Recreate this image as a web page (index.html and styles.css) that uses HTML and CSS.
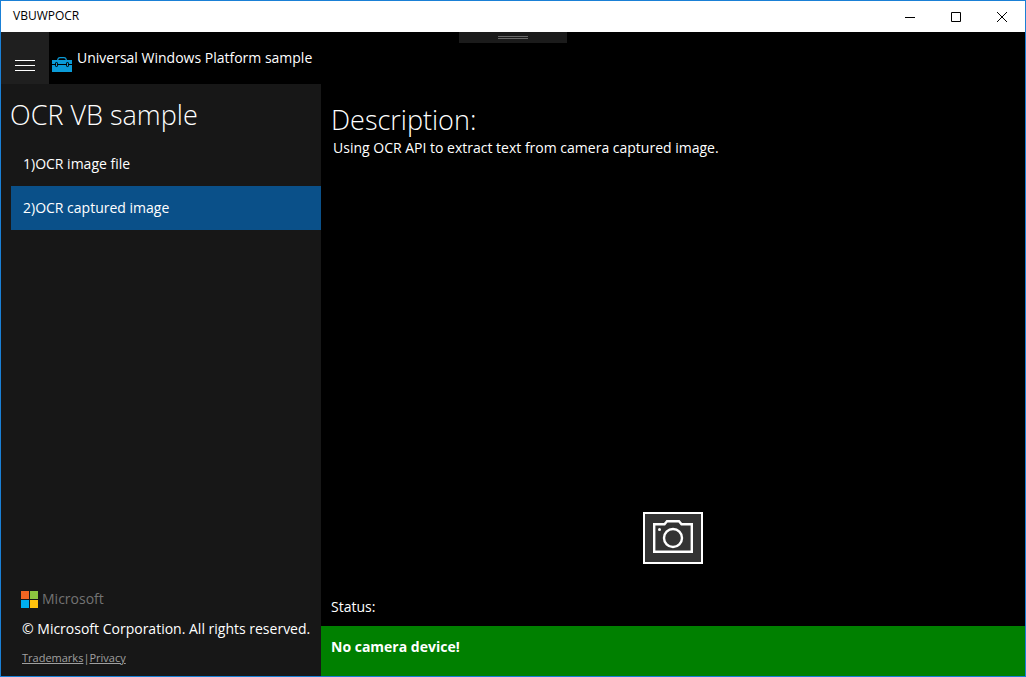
FILE: index.html
```
<!DOCTYPE html>
<html lang="en">
<head>
<meta charset="utf-8">
<title>VBUWPOCR</title>
<link rel="stylesheet" href="styles.css">
</head>
<body>
<div class="window">
  <div class="titlebar">
    <span class="titlebar-name">VBUWPOCR</span>
    <div class="caption-buttons">
      <button class="caption-button" type="button" aria-label="Minimize"><svg width="10" height="10" viewBox="0 0 10 10"><path d="M0 5.5H10"/></svg></button>
      <button class="caption-button" type="button" aria-label="Maximize"><svg width="10" height="10" viewBox="0 0 10 10"><path d="M.5.5h9v9h-9z"/></svg></button>
      <button class="caption-button" type="button" aria-label="Close"><svg width="10" height="10" viewBox="0 0 10 10"><path d="M0 0L10 10M10 0L0 10"/></svg></button>
    </div>
  </div>
  <div class="client">
    <div class="drag-handle"><span class="grip"></span></div>
    <header class="header">
      <button class="menu-button" type="button" aria-label="Menu"><svg width="20" height="12" viewBox="0 0 20 12"><path d="M0 .5H20M0 5.5H20M0 10.5H20"/></svg></button>
      <svg class="toolbox" width="20" height="15" viewBox="0 0 20 15">
        <path d="M0 3h20v12H0z" fill="#0a9bd8"/>
        <path d="M5.500 3.500Q6 .6 8 .6h4Q14 .6 14.500 3.500" fill="none" stroke="#0a9bd8" stroke-width="1.200"/>
        <path d="M0 7.500H3M6 7.500H14M17 7.500H20" stroke="#000"/>
        <rect x="3.500" y="5.500" width="2" height="4" rx=".7" fill="#0a9bd8" stroke="#000"/>
        <rect x="14.500" y="5.500" width="2" height="4" rx=".7" fill="#0a9bd8" stroke="#000"/>
      </svg>
      <span class="header-title">Universal Windows Platform sample</span>
    </header>
    <div class="body">
      <aside class="sidebar">
        <h1 class="heading sample-name">OCR VB sample</h1>
        <nav class="scenarios">
          <button class="scenario" type="button">1)OCR image file</button>
          <button class="scenario selected" type="button" aria-current="page">2)OCR captured image</button>
        </nav>
        <footer class="footer">
          <div class="brand">
            <svg width="17" height="17" viewBox="0 0 17 17"><path fill="#f26522" d="M0 0h8v8H0z"/><path fill="#8dc63f" d="M9 0h8v8H9z"/><path fill="#00aeef" d="M0 9h8v8H0z"/><path fill="#ffc20e" d="M9 9h8v8H9z"/></svg>
            <span class="brand-name">Microsoft</span>
          </div>
          <p class="copyright">© Microsoft Corporation. All rights reserved.</p>
          <div class="links"><a href="#trademarks">Trademarks</a><span class="divider">|</span><a href="#privacy">Privacy</a></div>
        </footer>
      </aside>
      <main class="main">
        <section class="description">
          <h2 class="heading">Description:</h2>
          <p class="description-text">Using OCR API to extract text from camera captured image.</p>
        </section>
        <button class="camera-button" type="button" aria-label="Capture image">
          <svg width="40" height="36" viewBox="0 0 40 36" fill="none" stroke="#fff" stroke-width="2.400"><path d="M1.200 4.200H11.500L14 1.200H26L28.500 4.200H38.800V31.800H1.200z"/><circle cx="20" cy="18" r="9"/><circle cx="6.500" cy="9.500" r="1.500" fill="#fff" stroke="none"/></svg>
        </button>
        <p class="status-label">Status:</p>
        <div class="status" role="status">No camera device!</div>
      </main>
    </div>
  </div>
</div>
</body>
</html>
```
FILE: styles.css
```
* {
  box-sizing: border-box;
}

body,
h1,
h2,
p {
  margin: 0;
}

body {
  font: 14px/20px "Open Sans", "Noto Sans", sans-serif;
  color: #fff;
  background: #000;
}

button {
  padding: 0;
  border: 0;
  font: inherit;
  color: inherit;
  background: none;
}

svg {
  display: block;
  flex: none;
}

.window {
  display: flex;
  flex-direction: column;
  min-height: 100vh;
  border: 1px solid #1a80d6;
}

.titlebar {
  display: flex;
  justify-content: space-between;
  height: 31px;
  padding-left: 12px;
  background: #fff;
  color: #000;
}

.titlebar-name {
  font-size: 12px;
  line-height: 30px;
}

.caption-buttons {
  display: flex;
}

.caption-button {
  display: grid;
  place-items: center;
  width: 46px;
}

.caption-button path {
  fill: none;
  stroke: #000;
}

.client {
  position: relative;
  display: flex;
  flex: 1;
  flex-direction: column;
}

.drag-handle {
  position: absolute;
  top: 0;
  left: 50%;
  display: grid;
  place-items: center;
  width: 108px;
  height: 11px;
  transform: translateX(-50%);
  background: #1b1b1b;
}

.grip {
  width: 30px;
  height: 3px;
  border: solid #6a6a6a;
  border-width: 1px 0;
}

.header {
  display: flex;
  height: 52px;
}

.menu-button {
  display: grid;
  place-items: center;
  width: 48px;
  padding-top: 15px;
  background: #1f1f1f;
}

.menu-button path {
  stroke: #fff;
}

.toolbox {
  align-self: flex-end;
  margin: 0 5px 12px 3px;
}

.header-title {
  padding-top: 16px;
}

.body {
  display: flex;
  flex: 1;
}

.sidebar {
  display: flex;
  flex: none;
  flex-direction: column;
  width: 320px;
  background: #171717;
}

.heading {
  font-size: 27px;
  font-weight: 300;
  line-height: 36px;
}

.sample-name {
  padding: 13px 9px 9px;
}

.scenarios {
  display: flex;
  flex-direction: column;
  padding-left: 10px;
}

.scenario {
  height: 44px;
  padding-left: 12px;
  text-align: left;
}

.selected {
  background: #0a5089;
}

.footer {
  display: flex;
  flex-direction: column;
  gap: 10px;
  margin-top: auto;
  padding: 0 0 9px 20px;
}

.brand {
  display: flex;
  align-items: center;
  gap: 4px;
}

.brand-name {
  color: #737373;
}

.copyright {
  padding-left: 1px;
  white-space: nowrap;
}

.links {
  display: flex;
  padding-left: 1px;
  font-size: 11px;
  line-height: 18px;
  color: #a0a0a0;
}

.links a {
  color: inherit;
}

.main {
  display: flex;
  flex: 1;
  flex-direction: column;
}

.description {
  padding: 18px 10px 0;
}

.description-text {
  padding-left: 2px;
}

.camera-button {
  display: grid;
  place-items: center;
  align-self: center;
  width: 60px;
  height: 52px;
  margin-top: auto;
  border: 2px solid #fff;
  background: #333;
}

.status-label {
  padding: 33px 10px 9px;
}

.status {
  height: 50px;
  padding: 11px 10px;
  background: #008000;
  font-weight: 700;
}
```
